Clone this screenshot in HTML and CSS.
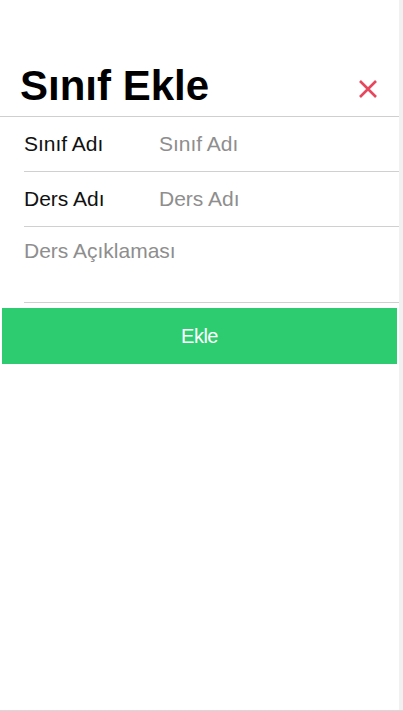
FILE: index.html
```html
<!DOCTYPE html>
<html lang="tr">
<head>
<meta charset="utf-8">
<title>Sınıf Ekle</title>
<link rel="stylesheet" href="styles.css">
</head>
<body>
<div class="page">
  <div class="modal">
    <div class="header">
      <h1 class="title">Sınıf Ekle</h1>
      <button class="close" aria-label="Kapat">
        <svg width="20" height="20" viewBox="0 0 20 20"><path d="M2 2 L18 18 M18 2 L2 18" stroke="#e5485d" stroke-width="2.6" fill="none"/></svg>
      </button>
    </div>
    <div class="form">
      <div class="row">
        <label class="label">Sınıf Adı</label>
        <span class="placeholder">Sınıf Adı</span>
      </div>
      <div class="row">
        <label class="label">Ders Adı</label>
        <span class="placeholder">Ders Adı</span>
      </div>
      <div class="area">
        <span class="placeholder">Ders Açıklaması</span>
      </div>
    </div>
    <button class="submit">Ekle</button>
  </div>
  <div class="side"></div>
</div>
</body>
</html>
```
FILE: styles.css
```css
html, body {
  margin: 0;
  padding: 0;
  background: #ffffff;
}
body {
  font-family: "Liberation Sans", Arial, sans-serif;
}
.page {
  display: flex;
  height: 710px;
  border-bottom: 1px solid #d8d8d8;
}
.modal {
  width: 399px;
  display: flex;
  flex-direction: column;
}
.side {
  flex: 1;
  background: #f1f1f1;
}
.header {
  height: 116px;
  border-bottom: 1px solid #cfcfcf;
  display: flex;
  align-items: flex-end;
  justify-content: space-between;
  padding-left: 20px;
  padding-right: 21px;
}
.title {
  margin: 0 0 6px 0;
  font-size: 42px;
  line-height: 48px;
  font-weight: bold;
  color: #000;
}
.close {
  border: 0;
  background: none;
  padding: 0;
  width: 20px;
  height: 20px;
  margin-bottom: 17px;
  display: flex;
}
.form {
  padding-left: 24px;
}
.row {
  height: 54px;
  border-bottom: 1px solid #d0d0d0;
  display: flex;
  align-items: center;
  font-size: 21px;
}
.label {
  width: 135px;
  color: #111;
}
.placeholder {
  color: #8e8e8e;
  font-size: 21px;
}
.area {
  border-bottom: 1px solid #d0d0d0;
  padding-top: 12px;
  box-sizing: border-box;
  height: 76px;
}
.submit {
  margin: 5px 2px 0 2px;
  height: 56px;
  border: 0;
  background: #2ecc71;
  color: #fff;
  font-family: "Liberation Sans", Arial, sans-serif;
  font-size: 20px;
  letter-spacing: -0.5px;
}
```
